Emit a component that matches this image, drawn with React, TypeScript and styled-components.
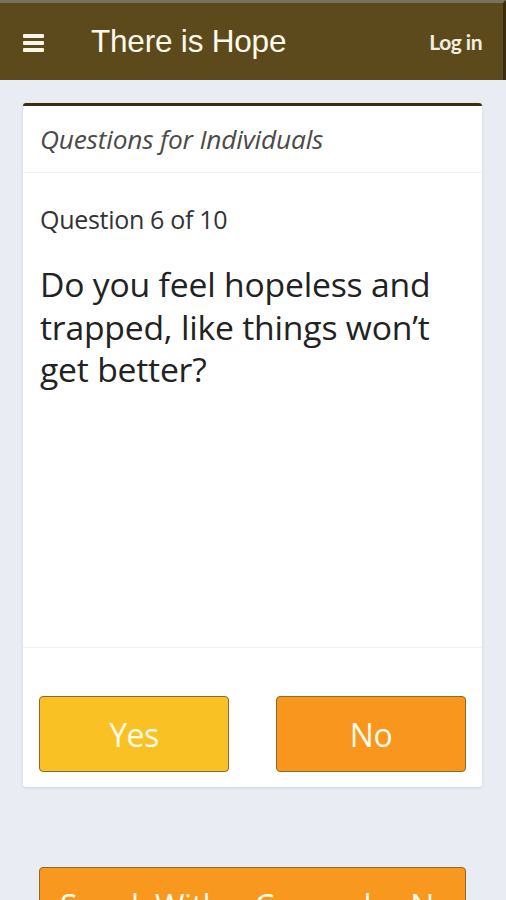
import React from "react";
import styled, { createGlobalStyle } from "styled-components";

const GlobalStyle = createGlobalStyle`
  html, body {
    margin: 0;
    padding: 0;
    background: #e9edf3;
    overflow: hidden;
  }
  body {
    font-family: "Open Sans", Lato, "Liberation Sans", sans-serif;
    color: #222;
  }
`;

function App() {
  return (
    <Page>
      <GlobalStyle />
      <TopBar>
        <MenuButton aria-label="menu">
          <Bar />
          <Bar />
          <Bar />
        </MenuButton>
        <Brand>There is Hope</Brand>
        <LoginLink>Log in</LoginLink>
      </TopBar>

      <Main>
        <Card>
          <CardHeader>Questions for Individuals</CardHeader>
          <CardBody>
            <Counter>Question 6 of 10</Counter>
            <QuestionText>
              Do you feel hopeless and trapped, like things won’t get better?
            </QuestionText>
          </CardBody>
          <CardFooter>
            <AnswerButton $tone="yes">Yes</AnswerButton>
            <AnswerButton $tone="no">No</AnswerButton>
          </CardFooter>
        </Card>

        <WideButton>Speak With a Counselor Now</WideButton>
      </Main>
    </Page>
  );
}

export default App;

const Page = styled.div`
  width: 506px;
  height: 900px;
  overflow: hidden;
  background: #e9edf3;
`;

const TopBar = styled.header`
  height: 77px;
  border-top: 3px solid #77725f;
  border-right: 3px solid #3a2e10;
  background: #5d4a1c;
  display: flex;
  align-items: center;
  padding: 0 21px 0 23px;
  box-sizing: content-box;
`;

const MenuButton = styled.div`
  width: 21px;
  display: flex;
  flex-direction: column;
  gap: 3px;
  margin-right: 47px;
  margin-top: 2px;
`;

const Bar = styled.span`
  display: block;
  height: 4px;
  border-radius: 1px;
  background: #fbf7e8;
`;

const Brand = styled.div`
  flex: 1;
  font-family: "Liberation Sans", Arial, sans-serif;
  font-size: 31.5px;
  color: #fdfaeb;
  letter-spacing: -0.2px;
`;

const LoginLink = styled.div`
  font-family: Lato, "Open Sans", sans-serif;
  font-size: 21px;
  font-weight: 700;
  color: #f2eee0;
  letter-spacing: -0.5px;
`;

const Main = styled.main`
  padding: 23px 24px 0 23px;
  display: flex;
  flex-direction: column;
  align-items: center;
`;

const Card = styled.section`
  width: 459px;
  background: #fff;
  border-top: 3px solid #3b2e0e;
  border-radius: 3px;
  box-shadow: 0 1px 3px rgba(60, 70, 90, 0.15);
  display: flex;
  flex-direction: column;
`;

const CardHeader = styled.div`
  height: 66px;
  display: flex;
  align-items: center;
  padding: 0 17px;
  border-bottom: 1px solid #f1f2f5;
  font-style: italic;
  font-size: 26.3px;
  color: #4a4a4a;
  letter-spacing: -0.2px;
`;

const CardBody = styled.div`
  height: 475px;
  padding: 30px 17px 0;
  box-sizing: border-box;
  border-bottom: 1px solid #f1f2f5;
`;

const Counter = styled.div`
  font-size: 25px;
  color: #333;
  line-height: 32px;
  letter-spacing: -0.3px;
`;

const QuestionText = styled.p`
  margin: 28px 0 0;
  font-size: 33.7px;
  line-height: 42.5px;
  color: #222;
  letter-spacing: -0.2px;
  padding-right: 6px;
`;

const CardFooter = styled.div`
  display: flex;
  justify-content: space-between;
  padding: 48px 16px 15px;
`;

const AnswerButton = styled.button<{ $tone: "yes" | "no" }>`
  width: 190px;
  height: 76px;
  border: 1px solid #8a6a2c;
  border-radius: 4px;
  background: ${(p) => (p.$tone === "yes" ? "#fac124" : "#f8961e")};
  color: #fffbe9;
  font-family: "Open Sans", Lato, sans-serif;
  font-size: 32px;
  letter-spacing: -0.5px;
  cursor: pointer;
`;

const WideButton = styled.button`
  margin-top: 80px;
  width: 427px;
  height: 76px;
  border: 1px solid #8a6a2c;
  border-radius: 4px;
  background: #f8981f;
  color: #fffbe9;
  font-family: "Open Sans", Lato, sans-serif;
  font-size: 32px;
  letter-spacing: -0.5px;
  white-space: nowrap;
  overflow: hidden;
  text-align: left;
  padding: 0 0 0 20px;
  align-self: flex-start;
  margin-left: 16px;
`;
